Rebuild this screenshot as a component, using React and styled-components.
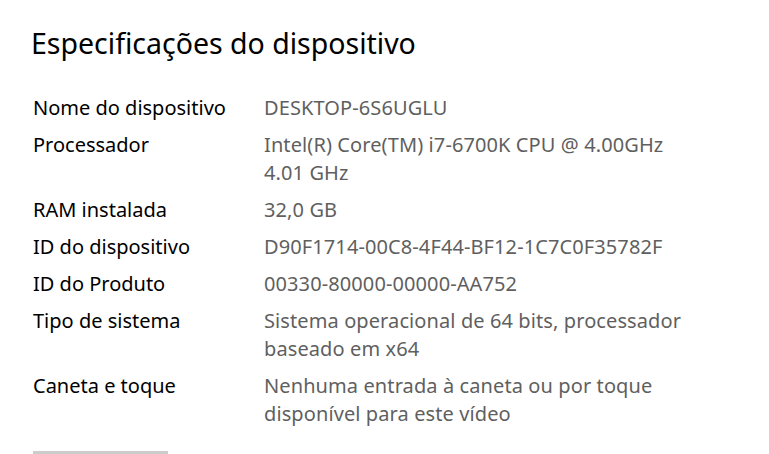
import styled, { createGlobalStyle } from 'styled-components';

const GlobalStyle = createGlobalStyle`
  html, body {
    margin: 0;
    padding: 0;
    background: #ffffff;
    overflow: hidden;
  }
  body {
    font-family: "Noto Sans", "Open Sans", sans-serif;
  }
`;

const specs = [
    { label: 'Nome do dispositivo', value: ['DESKTOP-6S6UGLU'] },
    { label: 'Processador', value: ['Intel(R) Core(TM) i7-6700K CPU @ 4.00GHz', '4.01 GHz'] },
    { label: 'RAM instalada', value: ['32,0 GB'] },
    { label: 'ID do dispositivo', value: ['D90F1714-00C8-4F44-BF12-1C7C0F35782F'] },
    { label: 'ID do Produto', value: ['00330-80000-00000-AA752'] },
    { label: 'Tipo de sistema', value: ['Sistema operacional de 64 bits, processador', 'baseado em x64'] },
    { label: 'Caneta e toque', value: ['Nenhuma entrada à caneta ou por toque', 'disponível para este vídeo'] },
];

const Page = styled.div`
    width: 769px;
    height: 454px;
    padding: 23px 0 0 31px;
    box-sizing: border-box;
    display: flex;
    flex-direction: column;
`;

const Title = styled.h2`
    margin: 0;
    font-weight: 400;
    font-size: 28.5px;
    line-height: 40px;
    color: #000;
`;

const SpecList = styled.div`
    display: flex;
    flex-direction: column;
    gap: 9px;
    margin-top: 31px;
    padding-left: 2px;
`;

const SpecRow = styled.div`
    display: grid;
    grid-template-columns: 231px 1fr;
    font-size: 20px;
    line-height: 28px;
`;

const Label = styled.div`
    color: #000;
`;

const Value = styled.div`
    color: #5f5f5f;
    letter-spacing: 0.1px;
`;

const Button = styled.div`
    margin: 23px 0 0 2px;
    width: 135px;
    height: 5px;
    background: #cccccc;
`;

const App = () => {
    return (
        <>
            <GlobalStyle />
            <Page>
                <Title>Especificações do dispositivo</Title>
                <SpecList>
                    {specs.map((s) => (
                        <SpecRow key={s.label}>
                            <Label>{s.label}</Label>
                            <Value>
                                {s.value.map((line) => (
                                    <div key={line}>{line}</div>
                                ))}
                            </Value>
                        </SpecRow>
                    ))}
                </SpecList>
                <Button />
            </Page>
        </>
    );
};

export default App;
